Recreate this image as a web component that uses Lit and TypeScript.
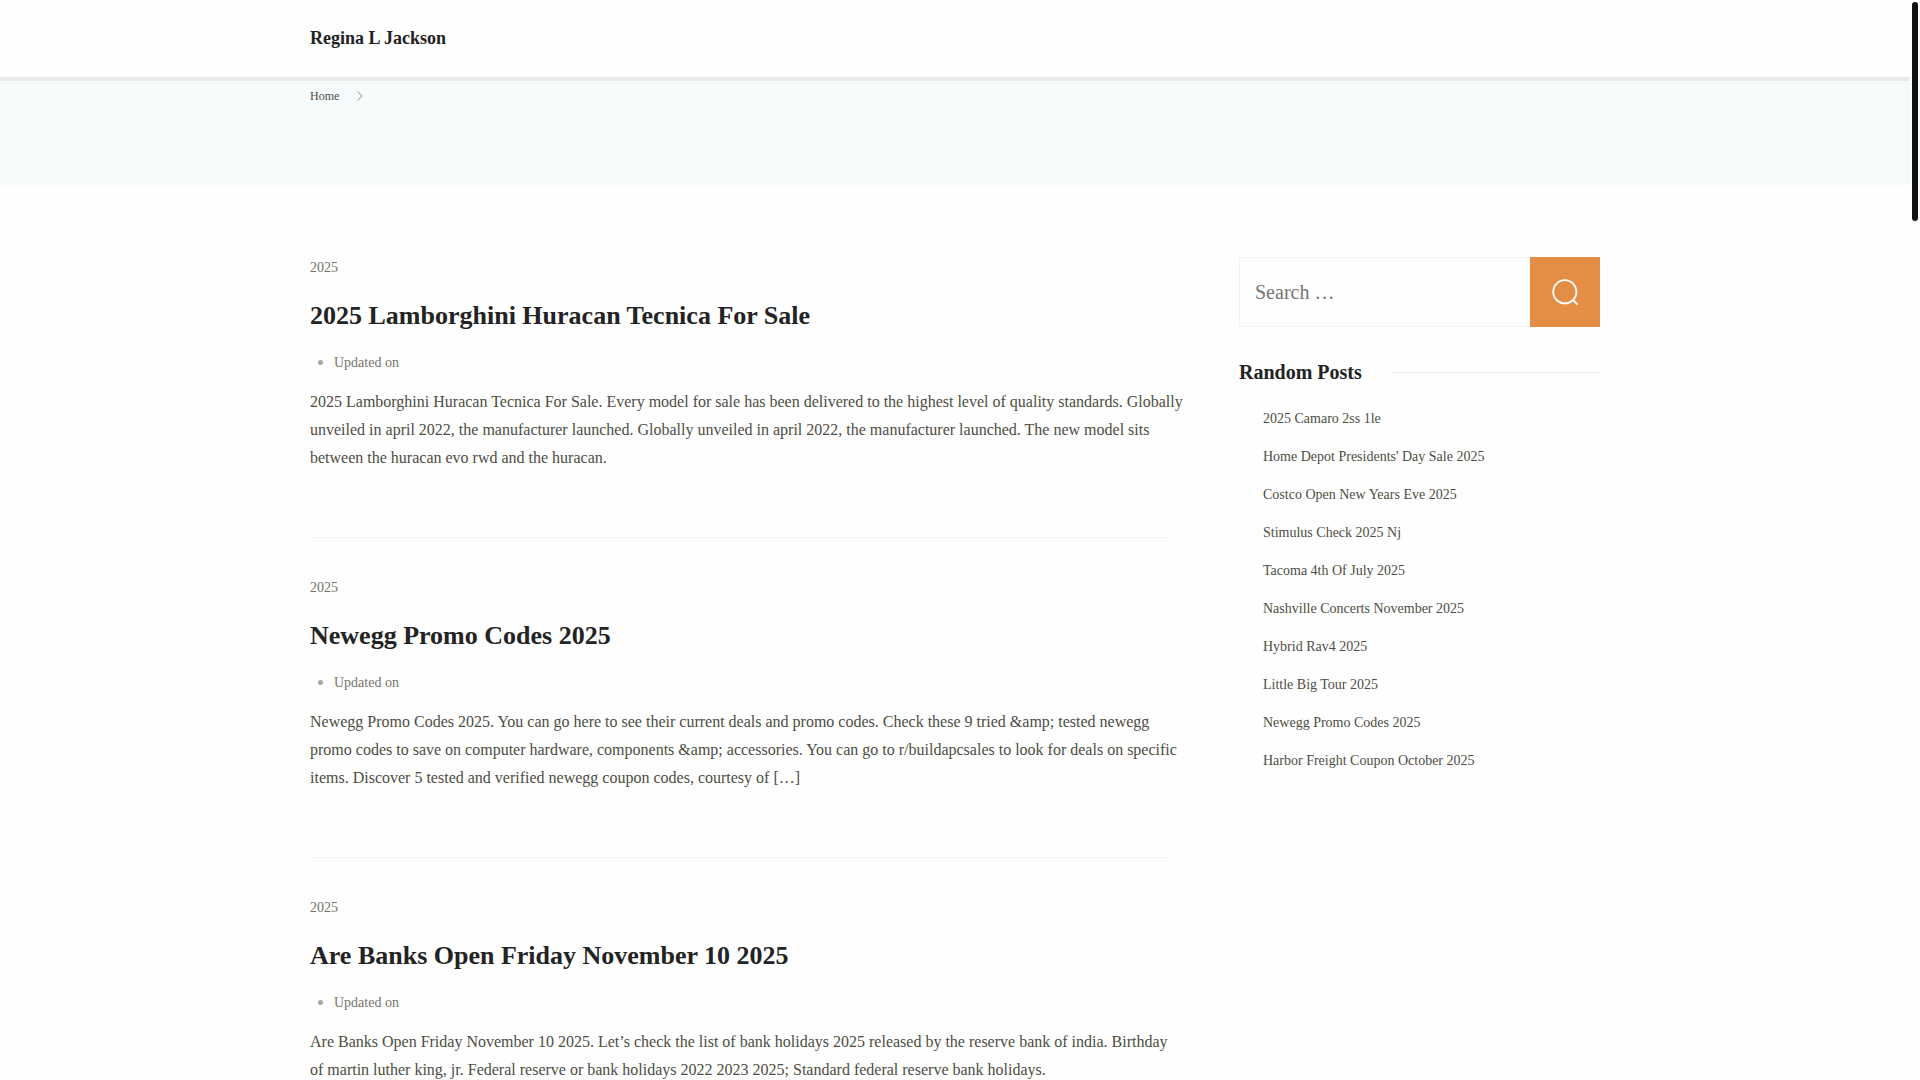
import { LitElement, html, css } from "lit";
import { customElement } from "lit/decorators.js";

interface Post {
  category: string;
  title: string;
  excerpt: string[];
}

const POSTS: Post[] = [
  {
    category: "2025",
    title: "2025 Lamborghini Huracan Tecnica For Sale",
    excerpt: [
      "2025 Lamborghini Huracan Tecnica For Sale. Every model for sale has been delivered to the highest level of quality standards. Globally",
      "unveiled in april 2022, the manufacturer launched. Globally unveiled in april 2022, the manufacturer launched. The new model sits",
      "between the huracan evo rwd and the huracan.",
    ],
  },
  {
    category: "2025",
    title: "Newegg Promo Codes 2025",
    excerpt: [
      "Newegg Promo Codes 2025. You can go here to see their current deals and promo codes. Check these 9 tried &amp; tested newegg",
      "promo codes to save on computer hardware, components &amp; accessories. You can go to r/buildapcsales to look for deals on specific",
      "items. Discover 5 tested and verified newegg coupon codes, courtesy of […]",
    ],
  },
  {
    category: "2025",
    title: "Are Banks Open Friday November 10 2025",
    excerpt: [
      "Are Banks Open Friday November 10 2025. Let’s check the list of bank holidays 2025 released by the reserve bank of india. Birthday",
      "of martin luther king, jr. Federal reserve or bank holidays 2022 2023 2025; Standard federal reserve bank holidays.",
    ],
  },
];

const RANDOM_POSTS = [
  "2025 Camaro 2ss 1le",
  "Home Depot Presidents' Day Sale 2025",
  "Costco Open New Years Eve 2025",
  "Stimulus Check 2025 Nj",
  "Tacoma 4th Of July 2025",
  "Nashville Concerts November 2025",
  "Hybrid Rav4 2025",
  "Little Big Tour 2025",
  "Newegg Promo Codes 2025",
  "Harbor Freight Coupon October 2025",
];

@customElement("app-root")
export class AppRoot extends LitElement {
  static styles = css`
    :host {
      display: grid;
      grid-template-columns: minmax(0, 1fr) 10px;
      height: 100vh;
      background: #fefefe;
      color: #4d4d42;
      font-family: "Liberation Serif", "Times New Roman", serif;
      font-size: 16px;
      line-height: 28px;
    }
    * {
      box-sizing: border-box;
    }
    a {
      color: inherit;
      text-decoration: none;
    }
    h1,
    h2,
    p,
    ul,
    ol {
      margin: 0;
      padding: 0;
    }
    .page {
      overflow: hidden auto;
      scrollbar-width: none;
    }
    .track {
      padding: 2px;
    }
    .thumb {
      height: 219px;
      border-radius: 3px;
      background: #0f1010;
    }
    .container {
      max-width: 1330px;
      margin: 0 auto;
      padding: 0 20px;
    }
    .header {
      padding: 24px 0 25px;
      border-bottom: 4px solid #e6eaea;
    }
    .brand {
      display: block;
      color: #232323;
      font-size: 18px;
      font-weight: 700;
    }
    .banner {
      padding: 5px 0 79px;
      background: #f5fbfb;
    }
    .crumbs {
      display: flex;
      align-items: center;
      list-style: none;
      font-size: 12px;
      line-height: 20px;
    }
    .crumb {
      display: flex;
      align-items: center;
      gap: 16px;
    }
    .chevron {
      width: 8px;
      height: 10px;
      fill: none;
      stroke: #8d9290;
    }
    .columns {
      display: grid;
      grid-template-columns: minmax(0, 860fr) minmax(0, 361fr);
      column-gap: 69px;
      align-items: start;
      padding-top: 72px;
    }
    .posts {
      padding-top: 1px;
    }
    .post {
      padding-bottom: 65px;
      border-bottom: 1px solid #f1f2f2;
      margin-bottom: 40px;
    }
    .small {
      color: #73736b;
      font-size: 14px;
      line-height: 20px;
    }
    .title {
      margin: 19px 0 17px;
      color: #232323;
      font-size: 26px;
      line-height: 38px;
    }
    .meta {
      margin-bottom: 15px;
      padding-left: 24px;
      line-height: 20px;
    }
    .meta li::marker {
      color: #a5a8a4;
    }
    .excerpt {
      margin-right: -20px;
      white-space: pre-line;
    }
    .search {
      display: flex;
      height: 70px;
    }
    .field {
      flex: 1;
      min-width: 0;
      border: 1px solid #f1f2f2;
      border-right: 0;
      padding: 0 15px;
      background: #fefefe;
      color: inherit;
      font: inherit;
      font-size: 20px;
      border-radius: 0;
    }
    .field::placeholder {
      color: #757575;
    }
    .submit {
      display: grid;
      place-items: center;
      width: 70px;
      border: 0;
      padding: 0;
      background: #e48e45;
      cursor: pointer;
    }
    .lens {
      width: 28px;
      height: 28px;
      fill: none;
      stroke: #fff;
      stroke-width: 1.8;
    }
    .widget-title {
      display: flex;
      align-items: center;
      gap: 30px;
      margin: 31px 0 19px;
      color: #232323;
      font-size: 20px;
    }
    .widget-title::after {
      content: "";
      flex: 1;
      height: 1px;
      background: #e6eaea;
    }
    .links {
      display: grid;
      gap: 10px;
      padding-left: 24px;
      list-style: none;
      font-size: 14px;
    }
  `;

  render() {
    return html`
      <div class="page">
        <header class="header">
          <div class="container"><a class="brand" href="#">Regina L Jackson</a></div>
        </header>
        <nav class="banner" aria-label="Breadcrumb">
          <div class="container">
            <ol class="crumbs">
              <li class="crumb">
                <a href="#">Home</a>
                <svg class="chevron" viewBox="0 0 8 10" aria-hidden="true">
                  <path d="M2.5 0.5 7 5 2.5 9.5" />
                </svg>
              </li>
            </ol>
          </div>
        </nav>
        <div class="container columns">
          <main class="posts">
            ${POSTS.map(
              (post) => html`
                <article class="post">
                  <div class="small"><a href="#">${post.category}</a></div>
                  <h2 class="title"><a href="#">${post.title}</a></h2>
                  <ul class="meta">
                    <li><span class="small">Updated on</span></li>
                  </ul>
                  <p class="excerpt">${post.excerpt.join("\n")}</p>
                </article>
              `
            )}
          </main>
          <aside>
            <form class="search" role="search" @submit=${(e: Event) => e.preventDefault()}>
              <input class="field" type="search" placeholder="Search …" aria-label="Search" />
              <button class="submit" type="submit" aria-label="Search">
                <svg class="lens" viewBox="0 0 28 28" aria-hidden="true">
                  <circle cx="13.8" cy="13.8" r="11.6" />
                  <path d="M22 22 26.6 26.6" />
                </svg>
              </button>
            </form>
            <h2 class="widget-title">Random Posts</h2>
            <ul class="links">
              ${RANDOM_POSTS.map((name) => html`<li><a href="#">${name}</a></li>`)}
            </ul>
          </aside>
        </div>
      </div>
      <div class="track" aria-hidden="true"><div class="thumb"></div></div>
    `;
  }
}
